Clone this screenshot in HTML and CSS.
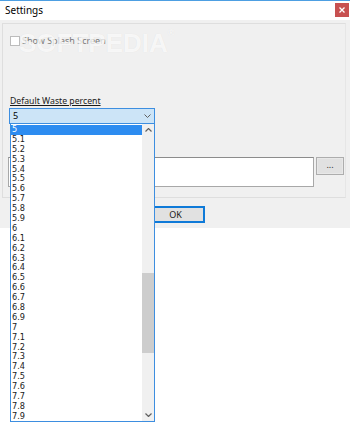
FILE: index.html
```html
<!DOCTYPE html>
<html>
<head>
<meta charset="utf-8">
<title>Settings</title>
<link rel="stylesheet" href="styles.css">
</head>
<body>
<div class="window">
  <div class="titlebar">
    <span class="title">Settings</span>
    <span class="close">
      <svg width="6" height="6" viewBox="0 0 6 6"><path d="M0.5 0.5 L5.5 5.5 M5.5 0.5 L0.5 5.5" stroke="#fff" stroke-width="1.3"/></svg>
    </span>
  </div>
  <div class="client">
    <div class="group">
      <label class="check-row">
        <span class="checkbox"></span>
        <span class="check-text">Show Splash Screen</span>
      </label>
      <div class="field-label">Default Waste percent</div>
      <div class="combo">
        <span class="combo-value">5</span>
        <svg class="chev" width="7" height="4" viewBox="0 0 7 4"><path d="M0.5 0.5 L3.5 3.5 L6.5 0.5" fill="none" stroke="#606060" stroke-width="1"/></svg>
      </div>
      <div class="path-row">
        <div class="textbox"></div>
        <div class="browse">...</div>
      </div>
    </div>
    <div class="button-row">
      <div class="ok">OK</div>
    </div>
  </div>
  <div class="watermark">SOFTPEDIA<sup>®</sup></div>
  <div class="dropdown">
    <div class="items">
      <div class="item selected">5</div>
      <div class="item">5.1</div>
      <div class="item">5.2</div>
      <div class="item">5.3</div>
      <div class="item">5.4</div>
      <div class="item">5.5</div>
      <div class="item">5.6</div>
      <div class="item">5.7</div>
      <div class="item">5.8</div>
      <div class="item">5.9</div>
      <div class="item">6</div>
      <div class="item">6.1</div>
      <div class="item">6.2</div>
      <div class="item">6.3</div>
      <div class="item">6.4</div>
      <div class="item">6.5</div>
      <div class="item">6.6</div>
      <div class="item">6.7</div>
      <div class="item">6.8</div>
      <div class="item">6.9</div>
      <div class="item">7</div>
      <div class="item">7.1</div>
      <div class="item">7.2</div>
      <div class="item">7.3</div>
      <div class="item">7.4</div>
      <div class="item">7.5</div>
      <div class="item">7.6</div>
      <div class="item">7.7</div>
      <div class="item">7.8</div>
      <div class="item">7.9</div>
    </div>
    <div class="scrollbar">
      <svg class="arrow" width="7" height="4" viewBox="0 0 7 4"><path d="M0.5 3.5 L3.5 0.5 L6.5 3.5" fill="none" stroke="#606060" stroke-width="1.2"/></svg>
      <div class="track">
        <div class="thumb"></div>
      </div>
      <svg class="arrow" width="7" height="4" viewBox="0 0 7 4"><path d="M0.5 0.5 L3.5 3.5 L6.5 0.5" fill="none" stroke="#606060" stroke-width="1.2"/></svg>
    </div>
  </div>
</div>
</body>
</html>
```

FILE: styles.css
```css
* { box-sizing: border-box; }
html, body { margin: 0; padding: 0; background: #ffffff; }
body {
  width: 350px;
  height: 424px;
  overflow: hidden;
  font-family: "Noto Sans", "Open Sans", sans-serif;
  color: #000;
}
.window { position: relative; width: 350px; }
.titlebar {
  height: 20px;
  border-top: 1px solid #4d9fe2;
  background: #fff;
  display: flex;
  align-items: center;
  justify-content: space-between;
  padding: 0 1px 0 5px;
}
.title { font-size: 10px; color: #000; line-height: 12px; margin-top: -1px; }
.close {
  width: 14px;
  height: 14px;
  background: #c75050;
  display: flex;
  align-items: center;
  justify-content: center;
  margin-top: -2px;
}
.client {
  background: #f0f0f0;
  height: 208px;
  padding: 3px 4px 0 2px;
}
.group {
  height: 175px;
  border: 1px solid #dedede;
  border-right-color: #e6e6e6;
  padding: 12px 0 0 0;
}
.check-row {
  display: flex;
  align-items: center;
  height: 10px;
  margin-left: 7px;
}
.checkbox {
  width: 10px;
  height: 10px;
  background: #fff;
  border: 1px solid #bcbcbc;
}
.check-text {
  font-size: 9px;
  color: #7a7a7a;
  margin-left: 2px;
  line-height: 10px;
}
.field-label {
  margin: 50px 0 0 7px;
  font-size: 8.7px;
  line-height: 10px;
  text-decoration: underline;
  color: #1a1a1a;
}
.combo {
  margin: 2px 0 0 6px;
  width: 146px;
  height: 16px;
  background: #cce4f7;
  border: 1px solid #3d8ee0;
  display: flex;
  align-items: center;
  justify-content: space-between;
  padding: 0 3px 0 3px;
}
.combo-value { font-size: 9px; line-height: 10px; }
.path-row {
  display: flex;
  align-items: flex-start;
  margin: 33px 0 0 5px;
}
.textbox {
  width: 306px;
  height: 30px;
  background: #fff;
  border: 1px solid #a8a8a8;
  border-top-color: #8c8c8c;
}
.browse {
  width: 28px;
  height: 18px;
  margin-left: 2px;
  background: #e1e1e1;
  border: 1px solid #adadad;
  box-shadow: inset 0 0 0 1px #e8e8e8;
  font-size: 9px;
  line-height: 14px;
  text-align: center;
  color: #333;
}
.button-row {
  display: flex;
  margin-top: 8px;
  padding-left: 144px;
}
.ok {
  width: 59px;
  height: 17px;
  background: #e1e1e1;
  border: 2px solid #0f7ad8;
  font-size: 9px;
  line-height: 13px;
  text-align: center;
  color: #1a1a1a;
}
.watermark {
  position: absolute;
  left: 19px;
  top: 28px;
  font-family: "Liberation Sans", sans-serif;
  font-weight: bold;
  font-size: 26px;
  color: rgba(255, 255, 255, 0.75);
  text-shadow: 0 0 1px rgba(0, 0, 0, 0.08);
  pointer-events: none;
}
.watermark sup { font-size: 9px; vertical-align: top; }
.dropdown {
  position: absolute;
  left: 10px;
  top: 124px;
  width: 145px;
  height: 298px;
  background: #fff;
  border: 1px solid #3d8ee0;
  border-top: none;
  display: flex;
}
.items {
  flex: 1;
  padding-top: 1px;
}
.item {
  height: 9.9px;
  line-height: 9.9px;
  font-family: "DejaVu Sans", sans-serif;
  font-size: 8.2px;
  padding-left: 1px;
  color: #1a1a1a;
}
.item.selected {
  background: #2d8cf0;
  color: #fff;
}
.scrollbar {
  width: 12px;
  background: #f0f0f0;
  display: flex;
  flex-direction: column;
  align-items: center;
  padding: 4px 0 4px 0;
}
.arrow { flex: none; }
.track {
  flex: 1;
  width: 12px;
  padding-top: 137px;
  margin: 4px 0;
}
.thumb {
  width: 12px;
  height: 80px;
  background: #cdcdcd;
}
```
